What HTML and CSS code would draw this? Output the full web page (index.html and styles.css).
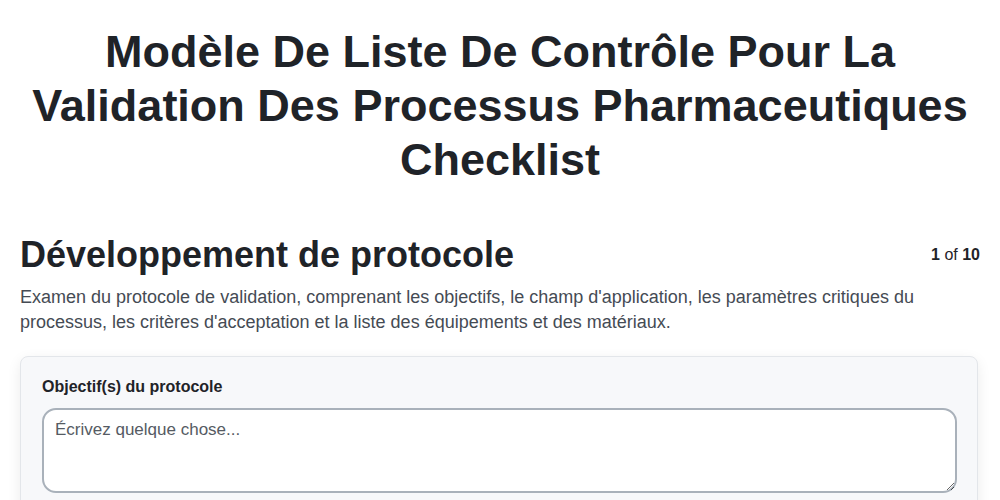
FILE: index.html
```html
<!DOCTYPE html>
<html lang="fr">
<head>
    <meta charset="UTF-8">
    <meta name="viewport" content="width=device-width, initial-scale=1.0">
    <title>Modèle De Liste De Contrôle Pour La Validation Des Processus Pharmaceutiques Checklist</title>
    <link rel="stylesheet" href="styles.css">
</head>
<body>
    <h1 class="page-title">Modèle De Liste De Contrôle Pour La Validation Des Processus Pharmaceutiques Checklist</h1>

    <section class="step">
        <div class="step-head">
            <h2 class="step-title">Développement de protocole</h2>
            <span class="step-count"><b>1</b> of <b>10</b></span>
        </div>
        <p class="step-desc">Examen du protocole de validation, comprenant les objectifs, le champ d'application, les paramètres critiques du processus, les critères d'acceptation et la liste des équipements et des matériaux.</p>

        <div class="card">
            <label class="field-label" for="objectifs">Objectif(s) du protocole</label>
            <textarea class="field-input" id="objectifs" placeholder="Écrivez quelque chose..."></textarea>
        </div>
    </section>
</body>
</html>
```

FILE: styles.css
```css
body {
    margin: 0;
    padding: 0 20px;
    font-family: "Liberation Sans", Arial, sans-serif;
    color: #1f2328;
    background: #fff;
}

.page-title {
    margin: 25px 0 0;
    font-size: 45px;
    line-height: 54px;
    text-align: center;
    font-weight: bold;
}

.step {
    margin-top: 46px;
}

.step-head {
    display: flex;
    justify-content: space-between;
    align-items: center;
}

.step-title {
    margin: 0;
    font-size: 36px;
    line-height: 44px;
    font-weight: bold;
}

.step-count {
    font-size: 16px;
    color: #1f2328;
}

.step-desc {
    margin: 8px 0 0;
    font-size: 18px;
    line-height: 25px;
    color: #454b54;
}

.card {
    margin-top: 21px;
    margin-right: 2px;
    padding: 21px 20px 20px 21px;
    background: #f7f8fa;
    border: 1px solid #e3e6ea;
    border-radius: 8px;
    box-shadow: 0 4px 14px rgba(0, 0, 0, 0.08);
}

.field-label {
    display: block;
    font-size: 16px;
    line-height: 18px;
    font-weight: bold;
    margin-bottom: 12px;
    color: #1f2328;
}

.field-input {
    display: block;
    box-sizing: border-box;
    width: 100%;
    height: 85px;
    padding: 10px 11px;
    border: 2px solid #a9b1ba;
    border-radius: 14px;
    background: #fff;
    font-family: "Liberation Sans", Arial, sans-serif;
    font-size: 17px;
    color: #1f2328;
    outline: none;
}

.field-input::placeholder {
    color: #555b63;
}
```
